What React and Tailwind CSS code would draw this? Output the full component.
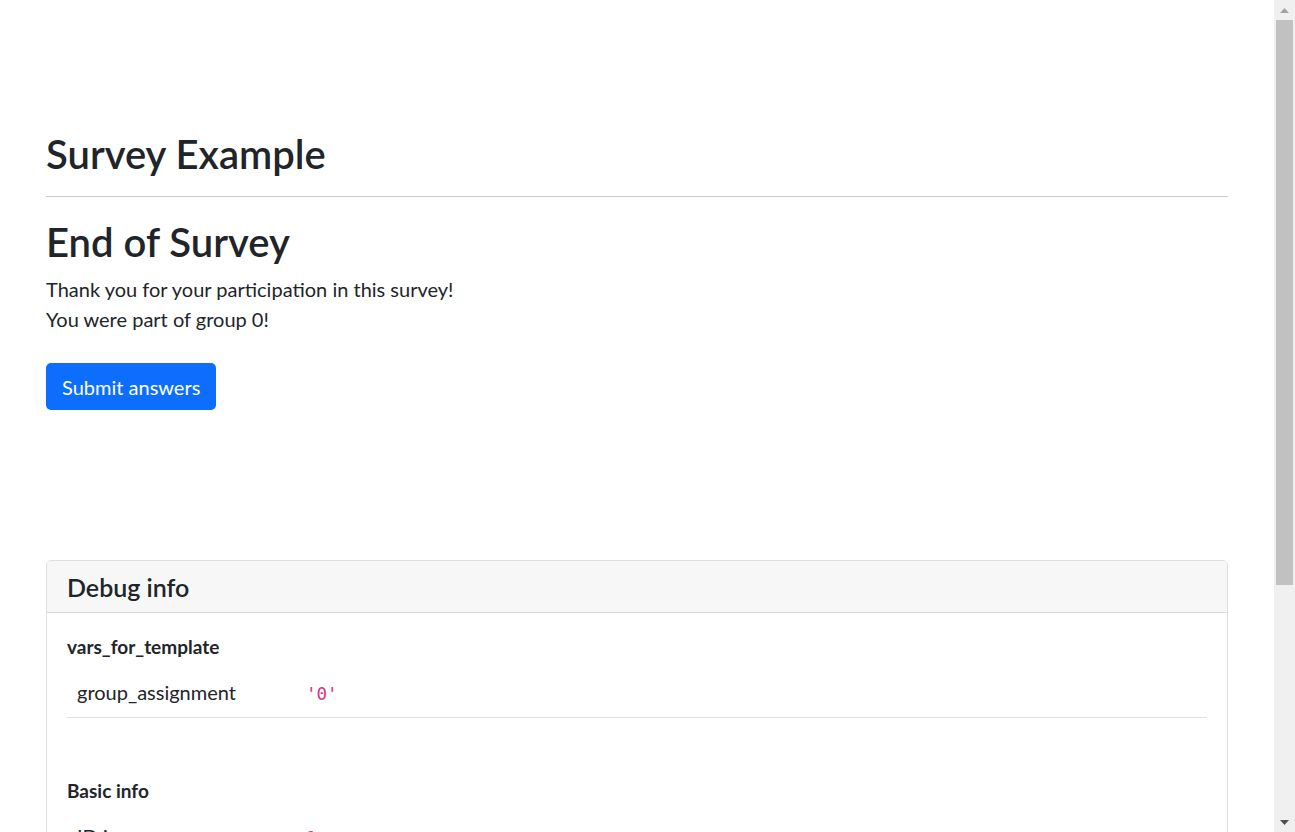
import React from "react";

const font = { fontFamily: "Lato, 'Noto Sans', sans-serif" };

const DebugTable = ({ rows }) => (
  <table className="w-full border-collapse mb-4">
    <tbody>
      {rows.map(([k, v]) => (
        <tr key={k} className="border-b border-[#dee2e6]">
          <td className="w-[229px] px-[10px] pt-[6px] pb-[10px] align-top">{k}</td>
          <td className="px-[10px] pt-[6px] pb-[10px] align-top">
            <code className="text-[17.5px] text-[#d63384] font-['DejaVu_Sans_Mono',monospace]">{v}</code>
          </td>
        </tr>
      ))}
    </tbody>
  </table>
);

const Scrollbar = () => (
  <div className="w-[21px] h-[832px] bg-[#f0f0f0] flex flex-col items-center shrink-0">
    <div className="h-[20px] flex items-center justify-center">
      <svg width="9" height="5" viewBox="0 0 9 5"><path d="M4.5 0 L9 5 L0 5 Z" fill="#a3a3a3" /></svg>
    </div>
    <div className="w-[17px] h-[565px] bg-[#c1c1c1]" />
    <div className="flex-1" />
    <div className="h-[20px] flex items-center justify-center">
      <svg width="9" height="5" viewBox="0 0 9 5"><path d="M0 0 L9 0 L4.5 5 Z" fill="#505050" /></svg>
    </div>
  </div>
);

export default function App() {
  return (
    <div className="flex h-[832px] overflow-hidden bg-white text-[#212529] text-[20px] leading-[1.5]" style={font}>
      <main className="flex-1 overflow-hidden">
        <div className="ml-[46px] w-[1182px] pt-[130px] pb-[40px]">
          <h1 className="text-[40px] font-semibold leading-[1.2] mb-[18px]">Survey Example</h1>
          <hr className="border-0 border-t border-[#cccccc]" />
          <h2 className="text-[40px] font-semibold leading-[1.2] mt-[21px] mb-[8px]">End of Survey</h2>
          <p>Thank you for your participation in this survey!</p>
          <p>You were part of group 0!</p>
          <button className="mt-[29px] h-[47px] px-[16px] rounded-[5px] bg-[#0d6efd] text-white text-[20px] leading-[1.5]">
            Submit answers
          </button>

          <div className="mt-[150px] border border-[rgba(0,0,0,0.125)] rounded-[5px] overflow-hidden">
            <div className="bg-[#f7f7f7] border-b border-[rgba(0,0,0,0.125)] px-[20px] h-[52px] flex items-center">
              <h3 className="text-[25px] font-semibold leading-[1.2] mt-[1px]">Debug info</h3>
            </div>
            <div className="p-[20px]">
              <h4 className="text-[19px] font-bold leading-[1.2] mt-[3px] mb-[12px]">vars_for_template</h4>
              <DebugTable rows={[["group_assignment", "'0'"]]} />
              <h4 className="text-[19px] font-bold leading-[1.2] mt-[62px] mb-[12px]">Basic info</h4>
              <DebugTable
                rows={[
                  ["ID in group", "1"],
                  ["Group", "1"],
                  ["Round number", "1"],
                  ["Participant", "P1"],
                  ["Participant label", "None"],
                  ["Session code", "x7k2m9qa"],
                ]}
              />
            </div>
          </div>
        </div>
      </main>
      <Scrollbar />
    </div>
  );
}
